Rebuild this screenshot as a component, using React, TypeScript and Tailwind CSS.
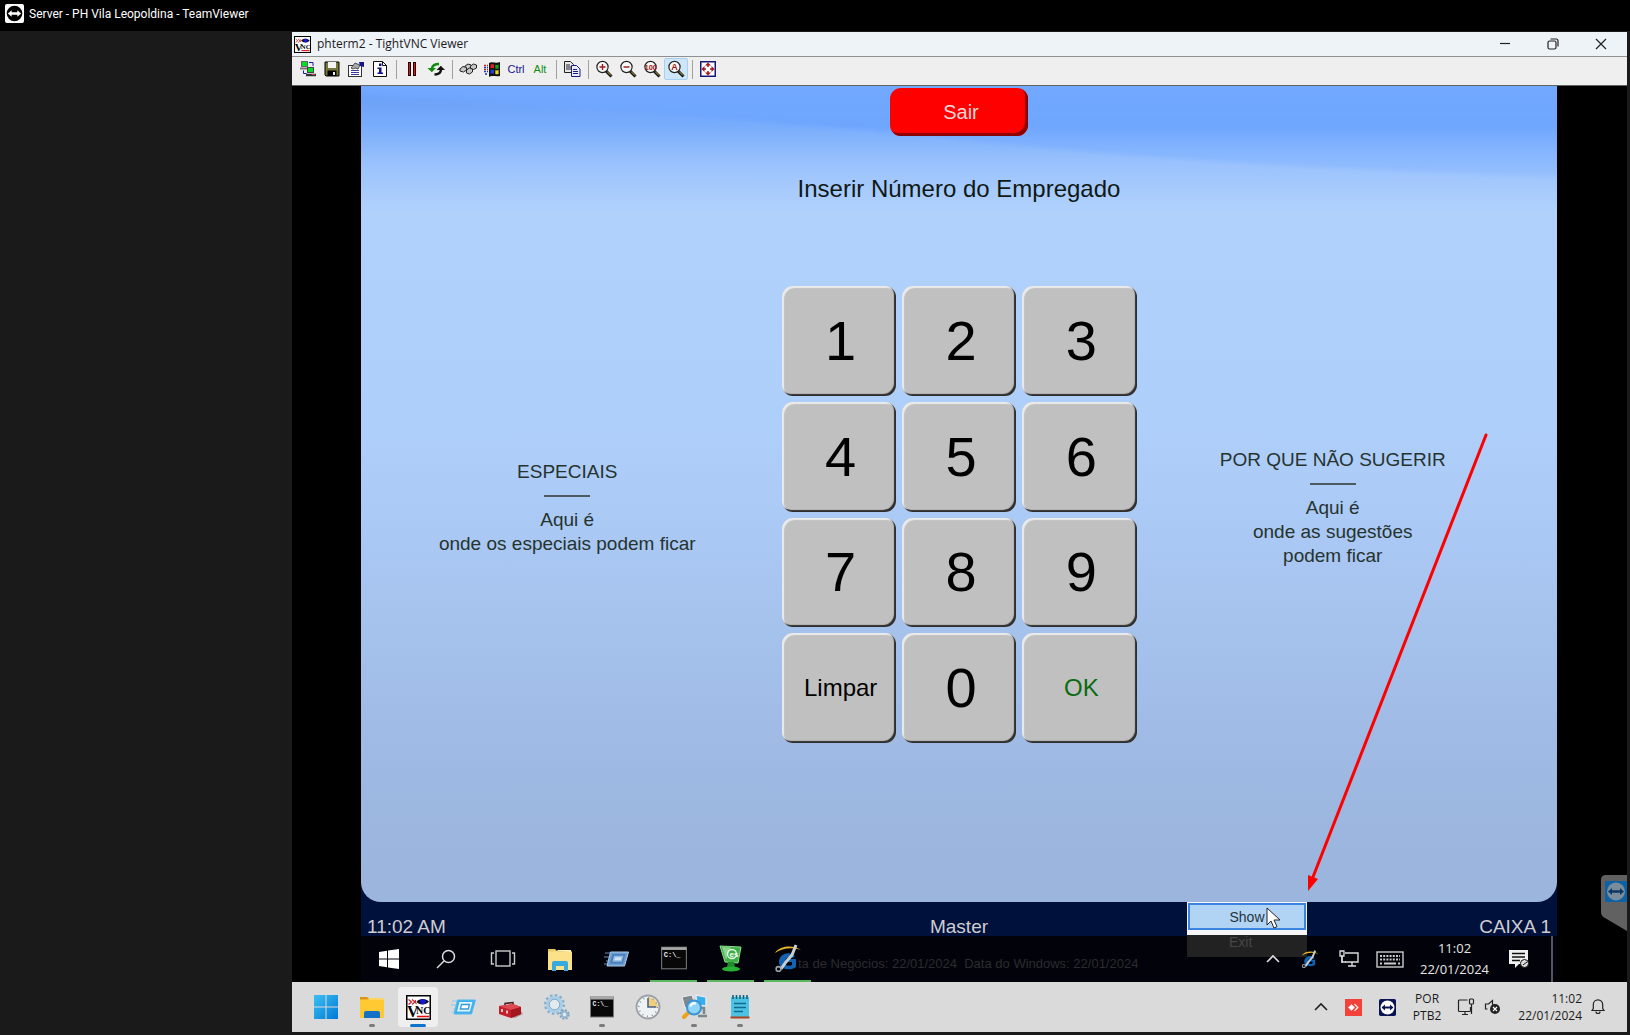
import React from "react";

type IconProps = { size?: number };

const TeamViewerMark = ({ size = 20, bg = "#ffffff", disc = "#000000", arrow = "#ffffff" }: { size?: number; bg?: string; disc?: string; arrow?: string }) => (
  <svg width={size} height={size} viewBox="0 0 20 20" aria-hidden="true">
    <rect width="20" height="20" rx="2" fill={bg} />
    <circle cx="10" cy="10" r="8.2" fill={disc} />
    <path d="M3 10l4-3.4v2.1h6V6.600l4 3.400-4 3.400v-2.100H7v2.100z" fill={arrow} />
  </svg>
);

const VncIcon = ({ size = 25 }: IconProps) => (
  <svg width={size} height={size} viewBox="0 0 25 25" aria-hidden="true">
    <rect x=".75" y=".75" width="23.500" height="23.500" fill="#fff" stroke="#000" strokeWidth="1.500" />
    <path d="M2.500 4.500l3 2.500-3 2.500M6 4.500l3 2.500-3 2.500M9.500 5c-1 2 0 3 1 4" stroke="#c81e2b" strokeWidth="1.200" fill="none" />
    <path d="M10.500 6.800C13 3 20 3 23 6.500c-3 4-10 4-12.500.3z" fill="#111" />
    <circle cx="17" cy="6.600" r="2.700" fill="#1414e6" />
    <text x="1" y="21.500" fontFamily="Liberation Serif, serif" fontWeight="700" fontSize="16" fill="#000">V</text>
    <text x="10" y="19" fontFamily="Liberation Serif, serif" fontWeight="700" fontSize="10" fill="#000">NC</text>
    <path d="M11 21.500h12" stroke="#e01010" strokeWidth="1.600" />
  </svg>
);

const ConnectIcon = () => (
  <svg width="18" height="18" viewBox="0 0 18 18" aria-hidden="true">
    <rect x="2.500" y="1.500" width="6" height="5" fill="#00e020" stroke="#666" />
    <path d="M1 8.500h8" stroke="#777" strokeWidth="2" />
    <rect x="8.500" y="7.500" width="6" height="5" fill="#00e020" stroke="#444" />
    <path d="M7 15h10" stroke="#333" strokeWidth="2.500" />
    <path d="M10 2.500h4v3.500M4.500 10.500v3h3" stroke="#1a1aa0" fill="none" />
    <path d="M13 14.500h3" stroke="#e03050" />
  </svg>
);
const SaveIcon = () => (
  <svg width="18" height="18" viewBox="0 0 18 18" aria-hidden="true">
    <path d="M2 2h14v14H3l-1-1z" fill="#77773a" stroke="#000" />
    <rect x="5" y="2" width="8" height="6" fill="#f3f3f3" />
    <rect x="4.500" y="10.500" width="9" height="5.500" fill="#000" />
    <rect x="10" y="12" width="2" height="3" fill="#eee" />
  </svg>
);
const OptionsIcon = () => (
  <svg width="18" height="18" viewBox="0 0 18 18" aria-hidden="true">
    <rect x="1.500" y="5.500" width="13" height="11" fill="#fff" stroke="#333" />
    <path d="M4 10.500h8M4 12.500h8M4 14.500h8" stroke="#3a3a9a" />
    <path d="M4 8l4-5 5 2-2 4-3-1-2 1z" fill="#a9a9a9" stroke="#333" strokeWidth=".8" />
    <path d="M12 2h5v5l-4-1z" fill="#15158c" />
  </svg>
);
const InfoIcon = () => (
  <svg width="18" height="18" viewBox="0 0 18 18" aria-hidden="true">
    <path d="M2.500 1.500h9l4 4v11h-13z" fill="#fff" stroke="#111" />
    <path d="M11.500 1.500v4h4" fill="none" stroke="#111" />
    <path d="M8 3.500h2.500V6H8zM6.500 7.500h4v5H12V14H6.500v-1.500H8V9H6.500z" fill="#10108c" />
  </svg>
);
const PauseIcon = () => (
  <svg width="18" height="18" viewBox="0 0 18 18" aria-hidden="true">
    <rect x="5.500" y="2.500" width="2" height="13" fill="#e01414" stroke="#200" />
    <rect x="10.500" y="2.500" width="2" height="13" fill="#e01414" stroke="#200" />
  </svg>
);
const RefreshIcon = () => (
  <svg width="18" height="18" viewBox="0 0 18 18" aria-hidden="true">
    <path d="M5 9C5 5 8 4 12 4" stroke="#128a12" strokeWidth="2.600" fill="none" />
    <path d="M.5 8h8.500l-4.200 4.200z" fill="#128a12" />
    <path d="M14 9c0 4-2.500 5.500-6.500 5.500" stroke="#111" strokeWidth="2.400" fill="none" />
    <path d="M9.500 10h8.500l-4.200-4.200z" fill="#111" />
  </svg>
);
const KeysIcon = () => (
  <svg width="18" height="18" viewBox="0 0 18 18" aria-hidden="true">
    <g fill="#c8c8c8" stroke="#222">
      <path d="M6 6l3-2 3 1v3l-3 1.500-3-1z" />
      <path d="M11.500 6l3-2 3 1v3l-3 1.500-3-1z" />
      <path d="M1 9l3-2.500 3.500 1V10l-3 2-3.500-1z" />
      <path d="M7.500 10l3-2 3 1v3l-3 2-3-1z" />
    </g>
  </svg>
);
const WinFlagIcon = () => (
  <svg width="18" height="18" viewBox="0 0 18 18" aria-hidden="true">
    <path d="M6 3c3-2 7 1 11-1v14c-4 1-8-1-11 1z" fill="#111" />
    <path d="M7.500 4.500c1.500-.6 2.500-.3 3.500 0v3.800c-1-.3-2-.5-3.500 0z" fill="#e02020" />
    <path d="M12.300 4.800c1 .2 2.200.2 3.300-.2v3.800c-1 .4-2.200.5-3.300.2z" fill="#18a018" />
    <path d="M7.500 10c1.500-.6 2.500-.3 3.500 0v3.800c-1-.3-2-.5-3.500 0z" fill="#2040d0" />
    <path d="M12.300 10.300c1 .2 2.200.2 3.300-.2v3.800c-1 .4-2.200.5-3.300.2z" fill="#e8d820" />
    <path d="M1 5.500h4M1 9.500h4" stroke="#d02020" strokeWidth="1.500" strokeDasharray="2 1" />
    <path d="M1 7.500h4M1 11.500h4M2 14h3" stroke="#2030b0" strokeWidth="1.500" strokeDasharray="2 1" />
  </svg>
);
const CopyIcon = () => (
  <svg width="18" height="18" viewBox="0 0 18 18" aria-hidden="true">
    <path d="M1.500 1.500h6l3 3v8h-9z" fill="#e8e8e8" stroke="#222" />
    <path d="M3 5h4M3 7h5M3 9h5" stroke="#222" />
    <path d="M8.500 5.500h5l3.500 3.500v7.500H8.500z" fill="#e8ecff" stroke="#1c1c80" />
    <path d="M10 9.500h4M10 11.500h5M10 13.500h5" stroke="#1c1c80" />
  </svg>
);
const Magnifier = ({ mark }: { mark: React.ReactNode }) => (
  <svg width="18" height="18" viewBox="0 0 18 18" aria-hidden="true">
    <path d="M11 11l5.500 5.500" stroke="#111" strokeWidth="3" />
    <path d="M12 11.500l4 4" stroke="#c8b838" strokeWidth="1" />
    <circle cx="7.500" cy="7" r="5.600" fill="#f8f8f8" stroke="#222" strokeWidth="1.200" />
    {mark}
  </svg>
);
const FullScreenIcon = () => (
  <svg width="18" height="18" viewBox="0 0 18 18" aria-hidden="true">
    <rect x="1.750" y="1.750" width="14.500" height="14.500" fill="#fff" stroke="#18187c" strokeWidth="1.500" />
    <path d="M9 2.500l3 3H6zM9 15.500l-3-3h6zM2.500 9l3-3v6zM15.500 9l-3 3V6z" fill="#a01818" />
    <path d="M9 5v2M9 11v2M5 9h2M11 9h2" stroke="#a01818" strokeWidth="1.500" />
  </svg>
);

const FolderIcon = ({ size = 26, light = false }: { size?: number; light?: boolean }) => (
  <svg width={size} height={size} viewBox="0 0 26 26" aria-hidden="true">
    <path d="M1 3h7l3 3H1z" fill={light ? "#e8c860" : "#dc9412"} />
    <path d="M1 5.500h24V24H1z" fill={light ? "#fbe28a" : "#ffc933"} />
    <path d="M1 5.500h8l2-1.500h13v2" fill={light ? "#fff0ac" : "#ffd65a"} />
    {light ? <path d="M5 25v-8q0-2 2-2h12q2 0 2 2v8h-4v-5H9v5z" fill="#3aa9e0" /> : <path d="M5 24v-5q0-2 2-2h12q2 0 2 2v5z" fill="#1271c4" />}
  </svg>
);
const RunIcon = ({ dark = false }: { dark?: boolean }) => (
  <svg width="28" height="20" viewBox="0 0 28 20" aria-hidden="true">
    <path d="M2 4h5M1 8h5M3 12h3M1 15h3" stroke={dark ? "#6c8db5" : "#8ccbf0"} strokeWidth="1.200" />
    <path d="M7.500 3h18l-4 14H4z" fill={dark ? "#6b9bd0" : "#3fb0ec"} stroke={dark ? "#a8cbea" : "#57b8ee"} />
    <path d="M9.500 5h13l-2.700 9.500H7z" fill={dark ? "#4a7fbe" : "#e4f4fd"} />
    <path d="M11.500 7.500h8l-1.200 4.500H10.300z" fill={dark ? "#cfe2f4" : "#fff"} stroke={dark ? "#90b8dd" : "#2f9ce0"} strokeWidth="1.300" />
  </svg>
);
const CmdIcon = ({ size = 26 }: IconProps) => (
  <svg width={size} height={size} viewBox="0 0 26 26" aria-hidden="true">
    <rect x="1.500" y="3" width="23" height="20" fill="#080808" stroke="#777" />
    <rect x="1.500" y="3" width="23" height="2.500" fill="#a8a8a8" />
    <text x="3.500" y="12" fontFamily="Liberation Mono, monospace" fontWeight="700" fontSize="6.500" fill="#eee">C:\_</text>
  </svg>
);
const PosIcon = () => (
  <svg width="26" height="28" viewBox="0 0 26 28" aria-hidden="true">
    <path d="M2 2l21 1-3 16-13-1z" fill="#3fae47" stroke="#8be08e" />
    <path d="M4 3l9 .5L8 16z" fill="#a9e5a8" opacity=".7" />
    <path d="M10 18h6l1 5H9z" fill="#1d8c28" />
    <ellipse cx="13" cy="25" rx="9" ry="2.400" fill="#26b335" />
    <circle cx="14" cy="10" r="4.500" fill="none" stroke="#e6f7e6" strokeWidth="1.300" />
    <text x="11.500" y="12.500" fontFamily="Liberation Sans, sans-serif" fontWeight="700" fontSize="8" fill="#f3fff3">es</text>
  </svg>
);
const GIcon = ({ size = 28 }: IconProps) => (
  <svg width={size} height={size} viewBox="0 0 28 28" aria-hidden="true">
    <path d="M21 12c-7-6-16-1-16 6 0 8 12 9 17 5v-8h-8v3h4v3c-4 2-8 0-7-4s5-5 8-3z" fill="#1263b0" />
    <path d="M1 9C5 2 18 0 27 6 18 3 8 4 1 9z" fill="#e9b92b" />
    <path d="M22 1l-4 10-6 7-5 7" stroke="#c9ced2" strokeWidth="3" fill="none" />
    <circle cx="4.500" cy="25" r="2.400" fill="none" stroke="#9ba2a8" strokeWidth="1.600" />
  </svg>
);
const ToolboxIcon = () => (
  <svg width="26" height="26" viewBox="0 0 26 26" aria-hidden="true">
    <path d="M14 23l10-6 2 3-8 4z" fill="#9b9b9b" />
    <path d="M8 12V9.500l8-1v2.500" stroke="#4b2020" strokeWidth="1.500" fill="none" />
    <path d="M2 12l14-2 8 3v7l-10 4-12-4z" fill="#c4202a" />
    <path d="M2 12l14-2 8 3-10 3z" fill="#dd4a52" />
    <path d="M14 16v8l10-4v-7z" fill="#a5161f" />
    <path d="M5 15v3M10 16.500v3" stroke="#f0d8d8" strokeWidth="1.800" />
  </svg>
);
const GearsIcon = () => (
  <svg width="28" height="28" viewBox="0 0 28 28" aria-hidden="true">
    <circle cx="12.500" cy="11.500" r="9" fill="none" stroke="#85aecb" strokeWidth="3" strokeDasharray="2.500 2.210" />
    <circle cx="12.500" cy="11.500" r="7" fill="none" stroke="#a8cfe9" strokeWidth="3" />
    <circle cx="12.500" cy="11.500" r="5.200" fill="#e2eaf0" stroke="#6f9bbb" strokeWidth=".8" />
    <circle cx="22.500" cy="21.500" r="4.200" fill="none" stroke="#7f9fb8" strokeWidth="2" strokeDasharray="1.900 1.400" />
    <circle cx="22.500" cy="21.500" r="2.800" fill="#dce8f0" stroke="#8fb4d0" strokeWidth="1.800" />
  </svg>
);
const SchedulerIcon = () => (
  <svg width="26" height="26" viewBox="0 0 26 26" aria-hidden="true">
    <circle cx="13" cy="13" r="11.500" fill="#eef2f5" stroke="#9aa0a6" strokeWidth="1.800" />
    <path d="M13 13V3a10 10 0 0110 10z" fill="#f2cf7c" />
    <path d="M13 4v9h8" stroke="#47618a" strokeWidth="1.600" fill="none" />
    <circle cx="13" cy="13" r="9.200" fill="none" stroke="#8a9198" strokeDasharray="1 3.800" strokeWidth="1.500" />
  </svg>
);
const RemoteSearchIcon = () => (
  <svg width="28" height="28" viewBox="0 0 28 28" aria-hidden="true">
    <path d="M2 4l10-2 3 10-10 3z" fill="#7c8890" stroke="#f0f0f0" />
    <path d="M16 2l10 2v9l-9-1z" fill="#35aef0" stroke="#e4e8ea" strokeWidth="1.500" />
    <path d="M18 15h6v6M18 23h9" stroke="#7d868c" strokeWidth="2.500" fill="none" />
    <path d="M9 19l-5 5" stroke="#e9a31c" strokeWidth="4" strokeLinecap="round" />
    <circle cx="14" cy="14.500" r="7" fill="#8ed3f8" stroke="#3c94d4" strokeWidth="2" />
    <path d="M10 13.500q2-4 6-3" stroke="#eefaff" strokeWidth="2.500" fill="none" />
  </svg>
);
const NotepadIcon = () => (
  <svg width="22" height="26" viewBox="0 0 22 26" aria-hidden="true">
    <rect x="2" y="3" width="18" height="20" fill="#4cc3e4" />
    <path d="M4 1v4M7.500 1v4M11 1v4M14.500 1v4M18 1v4" stroke="#14637e" strokeWidth="1.600" />
    <path d="M5 9.500h12M5 13.500h12M5 17.500h9" stroke="#146a8c" strokeWidth="1.700" />
    <rect x="1.500" y="22.500" width="19" height="2" fill="#a84420" />
  </svg>
);
const Win11Icon = () => (
  <svg width="24" height="24" viewBox="0 0 24 24" aria-hidden="true">
    <defs>
      <linearGradient id="w11" x1="0" y1="0" x2="1" y2="1">
        <stop offset="0" stopColor="#3cc0f4" />
        <stop offset="1" stopColor="#0078d4" />
      </linearGradient>
    </defs>
    <path d="M0 0h11.500v11.500H0zM12.500 0H24v11.500H12.500zM0 12.500h11.500V24H0zM12.500 12.500H24V24H12.500z" fill="url(#w11)" />
  </svg>
);
const Win10Icon = () => (
  <svg width="20" height="20" viewBox="0 0 20 20" aria-hidden="true">
    <path d="M0 3l8-1.200V9.500H0zM9 1.600L20 0v9.500H9zM0 10.500h8v7.700L0 17zM9 10.500h11V20L9 18.400z" fill="#fff" />
  </svg>
);
const SearchGlyph = () => (
  <svg width="20" height="20" viewBox="0 0 20 20" aria-hidden="true">
    <circle cx="12.500" cy="7.500" r="6" fill="none" stroke="#ddd" strokeWidth="1.500" />
    <path d="M8 12l-7 7" stroke="#ddd" strokeWidth="1.500" />
  </svg>
);
const TaskViewGlyph = () => (
  <svg width="26" height="20" viewBox="0 0 26 20" aria-hidden="true">
    <rect x="6" y="2" width="14" height="15" fill="none" stroke="#ccc" strokeWidth="1.400" />
    <path d="M4 4H1.500v11H4M22 4h2.500v11H22" fill="none" stroke="#ccc" strokeWidth="1.400" />
  </svg>
);
const Chevron = ({ color }: { color: string }) => (
  <svg width="16" height="10" viewBox="0 0 16 10" aria-hidden="true">
    <path d="M2 8l6-6 6 6" fill="none" stroke={color} strokeWidth="1.600" />
  </svg>
);
const EthernetGlyph = () => (
  <svg width="20" height="18" viewBox="0 0 20 18" aria-hidden="true">
    <path d="M6 3h13v9H6M3 6v7M9 16h8M13 12v4" fill="none" stroke="#ddd" strokeWidth="1.400" />
    <path d="M1 1h4v5H1z" fill="#111" stroke="#ddd" strokeWidth="1.300" />
    <path d="M3 6v6h4" fill="none" stroke="#ddd" strokeWidth="1.300" />
  </svg>
);
const KeyboardGlyph = () => (
  <svg width="28" height="17" viewBox="0 0 28 17" aria-hidden="true">
    <rect x="1" y="1" width="26" height="15" fill="none" stroke="#ccc" strokeWidth="1.400" />
    <path d="M4 5h20M4 8.500h20" stroke="#ccc" strokeWidth="1.800" strokeDasharray="2 1.200" />
    <path d="M4 12.500h2M8 12.500h12M22 12.500h2" stroke="#ccc" strokeWidth="1.800" />
  </svg>
);
const NotesGlyph = () => (
  <svg width="20" height="20" viewBox="0 0 20 20" aria-hidden="true">
    <path d="M0 1h19v14h-9l-4 4v-4H0z" fill="#f0f0f0" />
    <path d="M3 4.500h13M3 8h13M3 11.500h8" stroke="#111" strokeWidth="1.300" />
    <circle cx="15.500" cy="14.500" r="4" fill="#ddd" stroke="#111" />
    <path d="M14 16l4-3" stroke="#111" />
  </svg>
);
const AnyDeskIcon = () => (
  <svg width="17" height="17" viewBox="0 0 17 17" aria-hidden="true">
    <rect width="17" height="17" fill="#f2423a" />
    <path d="M6.500 5.200L9.800 8.500l-3.300 3.300L3.200 8.500z" fill="#fff" />
    <path d="M9.500 5.200l3.300 3.300-3.300 3.300" fill="none" stroke="#fff" strokeWidth="1.200" />
  </svg>
);
const NetGlyph = () => (
  <svg width="18" height="18" viewBox="0 0 18 18" aria-hidden="true">
    <path d="M10.500 2H2.500Q1.500 2 1.500 3v9.500q0 1 1 1h10q1 0 1-1V9M5 16.500h6M8 13.500v3" fill="none" stroke="#222" strokeWidth="1.200" />
    <rect x="12.500" y="1" width="4" height="5" rx="1" fill="#ddd" stroke="#222" strokeWidth="1.200" />
    <path d="M14.500 6v10" stroke="#222" strokeWidth="1.200" />
  </svg>
);
const MuteGlyph = () => (
  <svg width="17" height="16" viewBox="0 0 17 16" aria-hidden="true">
    <path d="M8.500 7V1.500L4.500 5H1.500v5h2" fill="none" stroke="#222" strokeWidth="1.200" />
    <circle cx="11" cy="10" r="5" fill="#222" />
    <path d="M9 8l4 4M13 8l-4 4" stroke="#fff" strokeWidth="1.200" />
  </svg>
);
const BellGlyph = () => (
  <svg width="16" height="18" viewBox="0 0 16 18" aria-hidden="true">
    <path d="M2 12.500l1.300-2V6.500a4.700 4.700 0 019.400 0v4l1.300 2z" fill="none" stroke="#222" strokeWidth="1.200" />
    <path d="M6 13.500a2 2 0 004 0" fill="none" stroke="#222" strokeWidth="1.200" />
  </svg>
);

const ToolButton = ({ label, active, children }: { label: string; active?: boolean; children: React.ReactNode }) => (
  <button
    type="button"
    aria-label={label}
    className={
      active
        ? "flex h-[22px] w-6 items-center justify-center rounded-xs border border-[#a5d2f3] bg-[#cfe6f9]"
        : "flex h-[22px] w-6 items-center justify-center"
    }
  >
    {children}
  </button>
);
const Separator = () => <span className="mr-[3px] ml-1 h-[19px] w-px bg-[#a0a0a0]" />;

const PadKey = ({ label }: { label: string }) => {
  const tone = label === "OK" ? "text-2xl text-[#0b6b12]" : label === "Limpar" ? "text-2xl text-black" : "text-[56px] text-black";
  return (
    <button
      type="button"
      className={
        "flex items-center justify-center rounded-[11px] bg-[#c0c0c0] pl-1 leading-none shadow-[inset_-2px_-2px_1px_#2e2e2e,inset_2px_2px_1px_#ebebeb] " +
        tone
      }
    >
      {label}
    </button>
  );
};

const remoteApps = [
  { name: "Start", icon: <Win10Icon />, open: false },
  { name: "Search", icon: <SearchGlyph />, open: false },
  { name: "Task view", icon: <TaskViewGlyph />, open: false },
  { name: "Explorer", icon: <FolderIcon size={26} light />, open: false },
  { name: "Run", icon: <RunIcon dark />, open: false },
  { name: "Command prompt", icon: <CmdIcon size={28} />, open: true },
  { name: "Back office", icon: <PosIcon />, open: true },
  { name: "Register", icon: <GIcon />, open: true },
];

const hostApps = [
  { name: "Start", icon: <Win11Icon />, state: "idle" },
  { name: "Explorer", icon: <FolderIcon size={26} />, state: "open" },
  { name: "TightVNC", icon: <VncIcon />, state: "active" },
  { name: "Run", icon: <RunIcon />, state: "idle" },
  { name: "Toolbox", icon: <ToolboxIcon />, state: "idle" },
  { name: "Services", icon: <GearsIcon />, state: "idle" },
  { name: "Command prompt", icon: <CmdIcon size={26} />, state: "open" },
  { name: "Task Scheduler", icon: <SchedulerIcon />, state: "idle" },
  { name: "Remote search", icon: <RemoteSearchIcon />, state: "open" },
  { name: "Notepad", icon: <NotepadIcon />, state: "open" },
];

function WindowBar() {
  return (
    <div className="flex h-6 items-center bg-[#eef3f8] pr-0.5 pl-0.5">
      <VncIcon size={17} />
      <h1 className="ml-[6px] text-xs text-[#1b1b1b]">phterm2 - TightVNC Viewer</h1>
      <div className="ml-auto flex">
        <button type="button" aria-label="Minimize" className="flex w-12 items-center justify-center">
          <svg width="12" height="12" viewBox="0 0 12 12"><path d="M1 5.500h10" stroke="#222" strokeWidth="1.200" /></svg>
        </button>
        <button type="button" aria-label="Restore" className="flex w-12 items-center justify-center">
          <svg width="12" height="12" viewBox="0 0 12 12" fill="none" stroke="#222" strokeWidth="1.200"><rect x="1" y="3" width="8" height="8" rx="1.500" /><path d="M3.500 1H9q2 0 2 2v5.500" /></svg>
        </button>
        <button type="button" aria-label="Close" className="flex w-12 items-center justify-center">
          <svg width="12" height="12" viewBox="0 0 12 12"><path d="M1 1l10 10M11 1L1 11" stroke="#222" strokeWidth="1.200" /></svg>
        </button>
      </div>
    </div>
  );
}

function Toolbar() {
  return (
    <div className="flex h-[30px] items-center border-t border-b border-t-[#8f9193] border-b-[#62625e] bg-[#efefef] pb-1 pl-1">
      <ToolButton label="New connection"><ConnectIcon /></ToolButton>
      <ToolButton label="Save session"><SaveIcon /></ToolButton>
      <ToolButton label="Options"><OptionsIcon /></ToolButton>
      <ToolButton label="Connection info"><InfoIcon /></ToolButton>
      <Separator />
      <ToolButton label="Pause"><PauseIcon /></ToolButton>
      <ToolButton label="Refresh"><RefreshIcon /></ToolButton>
      <Separator />
      <ToolButton label="Send Ctrl-Alt-Del"><KeysIcon /></ToolButton>
      <ToolButton label="Send Win key"><WinFlagIcon /></ToolButton>
      <button type="button" className="w-6 font-['Liberation_Sans',sans-serif] text-[11px] text-[#16168c]">Ctrl</button>
      <button type="button" className="w-6 font-['Liberation_Sans',sans-serif] text-[11px] text-[#109010]">Alt</button>
      <Separator />
      <ToolButton label="Transfer files"><CopyIcon /></ToolButton>
      <Separator />
      <ToolButton label="Zoom in"><Magnifier mark={<path d="M4.500 7h6M7.500 4v6" stroke="#a01818" strokeWidth="1.400" />} /></ToolButton>
      <ToolButton label="Zoom out"><Magnifier mark={<path d="M4.500 7h6" stroke="#a01818" strokeWidth="1.400" />} /></ToolButton>
      <ToolButton label="Zoom 100%"><Magnifier mark={<text x="1.500" y="10" fontFamily="Liberation Sans, sans-serif" fontSize="7.500" fontWeight="700" fill="#a01818">100</text>} /></ToolButton>
      <ToolButton label="Auto scale" active><Magnifier mark={<text x="4.300" y="10.300" fontFamily="Liberation Sans, sans-serif" fontSize="9" fontWeight="700" fill="#a01818">A</text>} /></ToolButton>
      <Separator />
      <ToolButton label="Full screen"><FullScreenIcon /></ToolButton>
    </div>
  );
}

function RemotePanel() {
  return (
    <section className="relative flex flex-1 flex-col overflow-hidden rounded-b-[20px] bg-[linear-gradient(#6fa6ff_0%,#b0d1fc_15%,#afcffb_42%,#9cb7e0_88%,#9bb5dd_100%)] font-['Liberation_Sans',sans-serif] text-[#26332f]">
      <svg className="absolute inset-x-0 top-0 h-[130px] w-full" viewBox="0 0 1196 130" preserveAspectRatio="none" aria-hidden="true">
        <defs>
          <linearGradient id="sky" x1="0" y1="0" x2="0" y2="1">
            <stop offset="0" stopColor="#72a8ff" />
            <stop offset=".3" stopColor="#6ea6fe" />
            <stop offset=".55" stopColor="#8ab8fe" />
            <stop offset="1" stopColor="#b0d1fc" />
          </linearGradient>
          <linearGradient id="haze" x1="0" y1="0" x2="0" y2="1">
            <stop offset="0" stopColor="#6a9ff6" />
            <stop offset=".22" stopColor="#7aaefc" />
            <stop offset=".5" stopColor="#9fc5fd" />
            <stop offset=".8" stopColor="#b0d1fc" />
          </linearGradient>
          <filter id="soft" x="-5%" y="-10%" width="110%" height="130%">
            <feGaussianBlur stdDeviation="2" />
          </filter>
        </defs>
        <rect width="1196" height="130" fill="url(#sky)" />
        <path d="M-30 8C200 18 400 34 600 54S950 84 1230 92V150H-30z" fill="url(#haze)" opacity=".8" filter="url(#soft)" />
      </svg>
      <div className="relative flex flex-1 flex-col items-center">
        <button type="button" className="mt-0.5 h-12 w-[138px] rounded-[11px] bg-[#ff0000] pl-1 text-xl text-[#f4d6d6] shadow-[inset_-3px_-3px_1px_#8c0000]">Sair</button>
        <h2 className="mt-[39px] text-2xl leading-7 text-[#101814]">Inserir Número do Empregado</h2>
        <div className="mt-[83px] grid w-full grid-cols-[1fr_355px_1fr] items-center">
          <div className="flex flex-col items-center pr-2 pb-[13px] text-center text-[19px] leading-6">
            <p>ESPECIAIS</p>
            <span className="my-[11px] h-0.5 w-[46px] bg-[#4c5a62]" />
            <p>Aqui é<br />onde os especiais podem ficar</p>
          </div>
          <div className="grid h-[457px] grid-cols-3 grid-rows-4 gap-[6px]">
            {["1", "2", "3", "4", "5", "6", "7", "8", "9", "Limpar", "0", "OK"].map((k) => (
              <PadKey key={k} label={k} />
            ))}
          </div>
          <div className="flex flex-col items-center pr-7 pb-[13px] text-center text-[19px] leading-6">
            <p>POR QUE NÃO SUGERIR</p>
            <span className="my-[11px] h-0.5 w-[46px] bg-[#4c5a62]" />
            <p>Aqui é<br />onde as sugestões<br />podem ficar</p>
          </div>
        </div>
      </div>
    </section>
  );
}

function TrayMenu() {
  return (
    <div className="absolute top-0 right-[250px] h-[55px] w-[120px] bg-linear-to-b from-[#f6f6f6] from-60% to-[#222222] to-60% p-px font-['Liberation_Sans',sans-serif] text-sm">
      <button type="button" className="flex h-[27px] w-full items-center justify-center border-2 border-[#3a83e0] bg-[#b2d4f4] text-[#24343c]">Show</button>
      <button type="button" className="flex h-6 w-full items-center pl-[41px] text-[#474747]">Exit</button>
      <svg className="absolute top-[5px] left-[79px]" width="16" height="23" viewBox="0 0 16 23" aria-hidden="true">
        <path d="M1 1v17l4-4 3 7 3-1.300L8 13h6z" fill="#fff" stroke="#222" />
      </svg>
    </div>
  );
}

function RemoteTaskbar() {
  return (
    <div className="relative flex h-[46px] items-stretch bg-[#02030a] pl-1">
      {remoteApps.map((a) => (
        <button
          key={a.name}
          type="button"
          aria-label={a.name}
          className={
            a.open
              ? "mr-[10px] flex w-[47px] items-center justify-center border-b-2 border-[#5cb860]"
              : "mr-[10px] flex w-[47px] items-center justify-center"
          }
        >
          {a.icon}
        </button>
      ))}
      <p className="absolute top-[18px] left-[437px] font-['Liberation_Sans',sans-serif] text-[13px] leading-5 whitespace-pre text-[#2b2b30]">ta de Negócios: 22/01/2024  Data do Windows: 22/01/2024</p>
      <div className="relative z-30 ml-auto flex items-center">
        <button type="button" aria-label="Hidden icons" className="mr-[20px]"><Chevron color="#ddd" /></button>
        <span className="mr-[20px]"><GIcon size={18} /></span>
        <span className="mr-[17px]"><EthernetGlyph /></span>
        <span className="mr-4"><KeyboardGlyph /></span>
        <div className="mr-5 text-center text-[13px] leading-[21px] text-[#e6e6e6]">11:02<br />22/01/2024</div>
        <span className="mr-[22px]"><NotesGlyph /></span>
        <span className="mr-1 h-full w-0.5 bg-[#55565a]" />
      </div>
    </div>
  );
}

function HostTaskbar() {
  return (
    <footer className="flex h-[50px] items-center bg-[#dadada] pl-[14px] text-xs text-[#1b1b1b]">
      {hostApps.map((a) => (
        <button
          key={a.name}
          type="button"
          aria-label={a.name}
          className={
            a.state === "active"
              ? "relative mr-[6px] flex h-10 w-10 items-center justify-center rounded-sm bg-[#efefef]"
              : "relative mr-[6px] flex h-10 w-10 items-center justify-center"
          }
        >
          {a.icon}
          {a.state === "open" && <span className="absolute bottom-0 h-[3px] w-[6px] rounded-full bg-[#7b7b7b]" />}
          {a.state === "active" && <span className="absolute bottom-0 h-[3px] w-4 rounded-full bg-[#0f74cc]" />}
        </button>
      ))}
      <div className="ml-auto flex items-center pr-[21px]">
        <button type="button" aria-label="Show hidden icons" className="mr-4"><Chevron color="#222" /></button>
        <span className="mr-[17px]"><AnyDeskIcon /></span>
        <span className="mr-[17px]"><TeamViewerMark size={17} bg="#0b1452" disc="#ffffff" arrow="#0b1452" /></span>
        <div className="mr-4 text-center leading-[17px]">POR<br />PTB2</div>
        <span className="mr-[9px]"><NetGlyph /></span>
        <span className="mr-[17px]"><MuteGlyph /></span>
        <div className="mr-2 text-right leading-[17px]">11:02<br />22/01/2024</div>
        <BellGlyph />
      </div>
    </footer>
  );
}

export default function App() {
  return (
    <div className="relative flex min-h-screen flex-col bg-[#1a1a1a] font-['Open_Sans',sans-serif]">
      <header className="flex h-[31px] items-center gap-[5px] bg-black pb-1 pl-[5px] text-xs text-white">
        <TeamViewerMark size={19} />
        <span className="font-['Roboto',sans-serif]">Server - PH Vila Leopoldina - TeamViewer</span>
      </header>
      <div className="flex flex-1">
        <aside className="w-[292px] shrink-0" />
        <main className="mt-px mr-[3px] mb-[3px] flex flex-1 flex-col">
          <WindowBar />
          <Toolbar />
          <div className="relative flex flex-1 flex-col bg-black pr-[70px] pl-[69px]">
            <div className="flex flex-1 flex-col bg-[#00123c]">
              <RemotePanel />
            </div>
            <div className="relative z-10">
              <div className="grid h-[34px] grid-cols-3 items-end bg-[#00123c] px-[6px] font-['Liberation_Sans',sans-serif] text-[19px] leading-[18px] text-[#cfcdd2]">
                <span>11:02 AM</span>
                <span className="text-center">Master</span>
                <span className="text-right">CAIXA 1</span>
              </div>
              <RemoteTaskbar />
              <TrayMenu />
            </div>
            <svg className="absolute right-[137px] bottom-[88px] z-20" width="190" height="462" viewBox="0 0 190 462" aria-hidden="true">
              <path d="M186 3L13 445" stroke="#ff0000" strokeWidth="3" strokeLinecap="round" />
              <path d="M8 459V443l10 4z" fill="#ff0000" />
            </svg>
            <button type="button" aria-label="TeamViewer panel" className="absolute right-0 bottom-[51px] z-20">
              <svg width="26" height="56" viewBox="0 0 26 56" aria-hidden="true">
                <path d="M26 0H5Q0 0 0 5v32q0 4 4 6l22 13z" fill="#616161" />
                <rect x="4" y="6" width="22" height="21" fill="#0d62a5" />
                <circle cx="15" cy="16.500" r="9" fill="#7b8c9b" />
                <path d="M7 16.500l4-3.500v2.300h8V13l4 3.500-4 3.500v-2.300h-8V20z" fill="#0b3a68" />
              </svg>
            </button>
          </div>
          <HostTaskbar />
        </main>
      </div>
    </div>
  );
}
